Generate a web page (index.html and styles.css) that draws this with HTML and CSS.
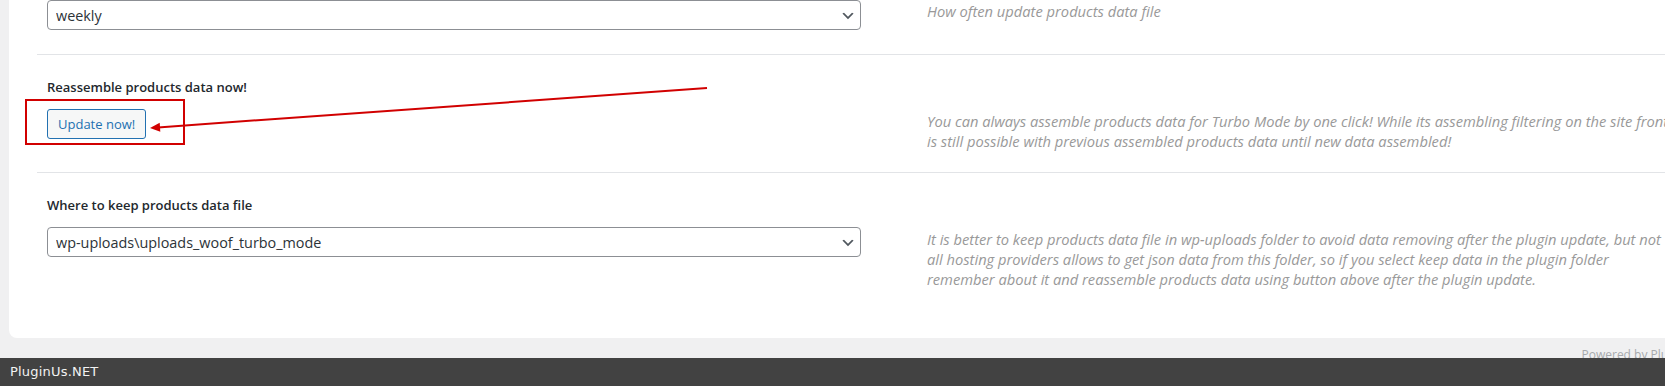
FILE: index.html
```html
<!DOCTYPE html>
<html lang="en">
 <head>
  <title>Turbo mode settings</title>
  <meta charset="utf-8"/>
  <link rel="stylesheet" href="styles.css">
 </head>
 <body>
	<div class="page">
		<div class="card">
			<div class="row row-top">
				<div class="field">
					<select class="select">
						<option>daily</option>
						<option selected>weekly</option>
						<option>monthly</option>
					</select>
					<svg class="chevron" width="16" height="16" viewBox="0 0 20 20"><path d="M5 6l5 5 5-5 2 1-7 7-7-7 2-1z"/></svg>
				</div>
				<p class="desc">How often update products data file</p>
			</div>

			<div class="row has-title">
				<label class="title">Reassemble products data now!</label>
				<div class="field">
					<button class="btn" type="button">Update now!</button>
				</div>
				<p class="desc">You can always assemble products data for Turbo Mode by one click! While its assembling filtering on the site front is still possible with previous assembled products data until new data assembled!</p>
			</div>

			<div class="row has-title">
				<label class="title" for="keep">Where to keep products data file</label>
				<div class="field">
					<select class="select" id="keep">
						<option selected>wp-uploads\uploads_woof_turbo_mode</option>
						<option>plugin folder</option>
					</select>
					<svg class="chevron" width="16" height="16" viewBox="0 0 20 20"><path d="M5 6l5 5 5-5 2 1-7 7-7-7 2-1z"/></svg>
				</div>
				<p class="desc">It is better to keep products data file in wp-uploads folder to avoid data removing after the plugin update, but not all hosting providers allows to get json data from this folder, so if you select keep data in the plugin folder remember about it and reassemble products data using button above after the plugin update.</p>
			</div>
		</div>

		<p class="powered">Powered by PluginUs.NET</p>

		<!-- annotation drawn over the screenshot -->
		<svg class="note" width="720" height="160" viewBox="0 0 720 160">
			<rect x="26" y="100" width="158" height="44" fill="none" stroke="#d10000" stroke-width="2"/>
			<line x1="707" y1="88" x2="158" y2="127.4" stroke="#d10000" stroke-width="2"/>
			<polygon points="150,128 160.3,131.8 159.7,122.8" fill="#d10000"/>
		</svg>
	</div>

	<div class="bar">PluginUs.NET</div>
 </body>
</html>
```

FILE: styles.css
```css
*{margin:0; padding:0; box-sizing:border-box;}
html, body{overflow:hidden;}
body{background:#f0f0f1; font-family:"Open Sans", "Liberation Sans", sans-serif; color:#2c3338;}

.page{position:relative; width:1725px; padding-left:9px;}
.card{background:#fff; border-radius:0 0 8px 8px; padding:0 28px 28px 28px;}

.row{display:grid; grid-template-columns:814px 750px; column-gap:66px; row-gap:12px; align-items:start;
padding:22px 10px 21px 10px; border-top:1px solid #e2e4e7;}
.row-top{border-top:none; padding-top:0; padding-bottom:24px;}
.row-top .desc{padding-top:1px;}
.has-title .field, .has-title .desc{grid-row:2;}
.field{grid-column:1; display:flex; align-items:center;}
.desc{grid-column:2; padding-top:2px; font-size:14.7px; line-height:20px; font-style:italic; color:#999;}

.title{grid-column:1; grid-row:1; display:block; font-size:13px; line-height:20px; font-weight:600; color:#23282d;}

.select{width:100%; height:30px; padding:0 24px 0 8px; border:1px solid #8c8f94; border-radius:4px;
background:#fff; font-family:inherit; font-size:14.4px; color:#2c3338; appearance:none; -webkit-appearance:none;}
.chevron{flex:none; margin:1px 0 0 -21px; fill:#50575e; pointer-events:none;}

.btn{height:30px; padding:0 10px; border:1px solid #2271b1; border-radius:3px; background:#f6f7f7;
font-family:inherit; font-size:13px; color:#2271b1; cursor:pointer;}

.powered{padding:8px 0 0 0; text-align:right; font-size:12px; line-height:18px; color:#a7aaad; height:60px;}

.note{position:absolute; left:0; top:0;}

.bar{position:fixed; left:0; right:0; bottom:0; height:28px; padding-left:10px; background:#424242;
font-family:"DejaVu Sans", sans-serif; font-size:13px; letter-spacing:0.2px; line-height:28px; color:#f2f2f2;}
```
